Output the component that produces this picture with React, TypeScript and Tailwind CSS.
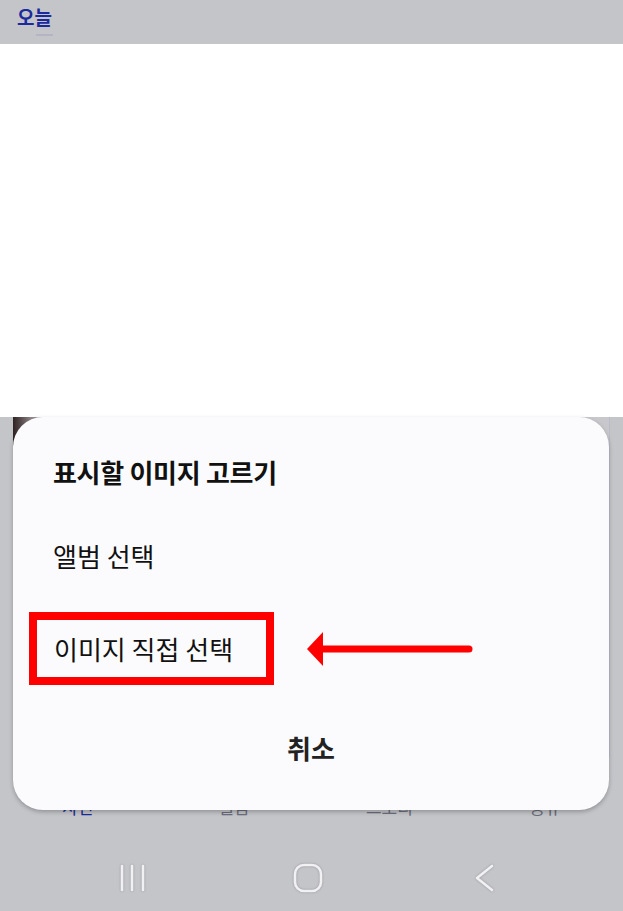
const FONT = { fontFamily: '"Noto Sans CJK KR", "Noto Sans", sans-serif' };

function NavRecent() {
  return (
    <svg width="40" height="30" viewBox="0 0 40 30" className="drop-shadow-[0_0_1px_rgba(0,0,0,0.25)]">
      <g stroke="#f1f1f4" strokeWidth="2.6" strokeLinecap="round">
        <line x1="10" y1="3" x2="10" y2="27" />
        <line x1="20" y1="3" x2="20" y2="27" />
        <line x1="31" y1="3" x2="31" y2="27" />
      </g>
    </svg>
  );
}

function NavHome() {
  return (
    <svg width="40" height="30" viewBox="0 0 40 30" className="drop-shadow-[0_0_1px_rgba(0,0,0,0.25)]">
      <rect x="7" y="2" width="26" height="26" rx="9" fill="none" stroke="#f1f1f4" strokeWidth="2.6" />
    </svg>
  );
}

function NavBack() {
  return (
    <svg width="40" height="30" viewBox="0 0 40 30" className="drop-shadow-[0_0_1px_rgba(0,0,0,0.25)]">
      <polyline points="28,3 13,15 28,27" fill="none" stroke="#f1f1f4" strokeWidth="2.6" strokeLinecap="round" strokeLinejoin="round" />
    </svg>
  );
}

function Arrow() {
  return (
    <svg width="168" height="36" viewBox="0 0 168 36" className="ml-[32px]">
      <line x1="16" y1="18" x2="163" y2="18" stroke="#ff0000" strokeWidth="7" strokeLinecap="round" />
      <polygon points="1,18 17,1 17,35" fill="#ff0000" />
    </svg>
  );
}

export default function App() {
  return (
    <div style={FONT} className="relative w-[623px] h-[911px] overflow-hidden bg-[#c4c5c9] flex flex-col">
      <div className="h-[44px] shrink-0 flex flex-col pl-[17px] pt-[4px]">
        <span className="text-[19px] font-bold leading-[26px] text-[#1b2a9c]">오늘</span>
        <span className="mt-[4px] ml-[19px] w-[17px] h-[2px] bg-[#b3b5c6]" />
      </div>

      <div className="h-[373px] shrink-0 bg-white" />

      <div className="flex-1 flex flex-col">
        <div className="mx-[13px] h-[340px] shrink-0 bg-gradient-to-r from-[#2f2323] from-0% via-[#8d8587] via-[3%] to-[#c8c8cc] to-[6%] border-r border-[#b8bccb]" />
        <div className="mt-[38px] h-[24px] shrink-0 grid grid-cols-4 text-[17px] leading-[24px]">
          <span className="text-center text-[#1b2a9c]">사진</span>
          <span className="text-center text-[#6b6e7c]">앨범</span>
          <span className="text-center text-[#6b6e7c]">스토리</span>
          <span className="text-center text-[#6b6e7c]">공유</span>
        </div>
        <div className="mt-[44px] h-[30px] flex items-center pl-[112px]">
          <NavRecent />
          <div className="w-[136px]" />
          <NavHome />
          <div className="w-[136px]" />
          <NavBack />
        </div>
      </div>

      {/* bottom sheet dialog */}
      <div className="absolute left-[13px] top-[417px] w-[596px] h-[393px] rounded-[30px] bg-[#fbfbfe] shadow-[0_2px_4px_rgba(0,0,0,0.25)] flex flex-col px-[16px]">
        <div className="h-[108px] shrink-0 flex items-center pl-[24px]">
          <span className="text-[26px] font-bold text-[#111] tracking-[-0.3px]">표시할 이미지 고르기</span>
        </div>
        <div className="h-[60px] shrink-0 flex items-center pl-[24px]">
          <span className="text-[26px] text-[#111]">앨범 선택</span>
        </div>
        <div className="h-[27px] shrink-0" />
        <div className="h-[73px] shrink-0 flex items-center">
          <div className="w-[245px] h-[73px] border-[8px] border-[#ff0000] flex items-center pl-[17px]">
            <span className="text-[26px] text-[#111] whitespace-nowrap">이미지 직접 선택</span>
          </div>
          <Arrow />
        </div>
        <div className="flex-1 flex items-center justify-center">
          <span className="text-[26px] font-bold text-[#222]">취소</span>
        </div>
      </div>
    </div>
  );
}
